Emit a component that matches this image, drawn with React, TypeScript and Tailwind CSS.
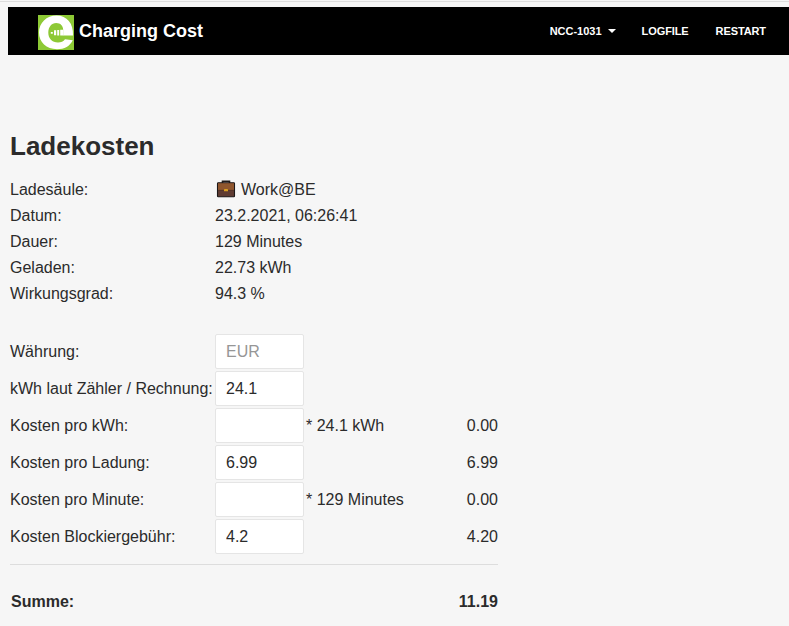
function Logo() {
  return (
    <svg width="36" height="35" viewBox="0 0 36 35" className="shrink-0" aria-hidden="true">
      <rect width="36" height="35" fill="#8dc935" />
      <path
        d="M35 20.500C35.500 8.500 29 .6 18.500 .6C8.500 .6 1 8 1 17.600C1 27.500 8.500 34.200 19 34.200C26.500 34.200 32 31 34.800 25.200L27 24.300C25.500 26.600 23 27.600 20 27.600C14.200 27.600 10.300 23.500 10.300 17.800C10.300 12 13.500 8 18.200 8C22.500 8 25.200 10.800 25.200 15V20.500Z"
        fill="#fff"
      />
      <path d="M12.800 17h2v1.800h-2zM16 15.300h2.200v5H16zM19.200 15h2v5.500h-2zM22.200 14.700h3.200v5.800h-3.200z" fill="#fff" />
    </svg>
  );
}

function Briefcase() {
  return (
    <svg width="20" height="18" viewBox="0 0 20 18" className="mr-[5px] mb-0.5 ml-px shrink-0" aria-hidden="true">
      <path d="M6.500 4V1.300h7V4" fill="none" stroke="#211b1b" strokeWidth="1.600" />
      <rect x="1.500" y="2.800" width="17" height="14" rx=".7" fill="#5f3b32" stroke="#1c1717" strokeWidth="1.100" />
      <path d="M2 3.300h16v6.800H2z" fill="#8f562e" />
      <path d="M2 9.900h16v.6H2z" fill="#4b2c24" />
      <rect x="8" y="9" width="4" height="2.300" rx=".4" fill="#dba020" />
    </svg>
  );
}

const details = [
  ["Datum:", "23.2.2021, 06:26:41"],
  ["Dauer:", "129 Minutes"],
  ["Geladen:", "22.73 kWh"],
  ["Wirkungsgrad:", "94.3 %"],
];

const fields = [
  { label: "Währung:", value: "", placeholder: "EUR", note: "", total: "" },
  { label: "kWh laut Zähler / Rechnung:", value: "24.1", note: "", total: "" },
  { label: "Kosten pro kWh:", value: "", note: "* 24.1 kWh", total: "0.00" },
  { label: "Kosten pro Ladung:", value: "6.99", note: "", total: "6.99" },
  { label: "Kosten pro Minute:", value: "", note: "* 129 Minutes", total: "0.00" },
  { label: "Kosten Blockiergebühr:", value: "4.2", note: "", total: "4.20" },
];

export default function App() {
  return (
    <div className="h-[626px] overflow-hidden bg-[#f6f6f6] pt-px font-['Liberation_Sans',Arial,sans-serif] text-base text-[#2b2b2b]">
      <div className="h-px bg-[#dddddd]" />
      <header className="mt-[5px] ml-2 flex h-12 items-center bg-black pr-[23px] pl-[30px] text-white">
        <div className="pt-[3px]">
          <Logo />
        </div>
        <span className="ml-[5px] text-[18px] leading-6 font-bold">Charging Cost</span>
        <nav className="ml-auto flex items-center text-[11px] font-bold">
          <a className="flex items-center">
            NCC-1031
            <span className="ml-[6px] border-x-4 border-t-4 border-x-transparent border-t-white" />
          </a>
          <a className="ml-[26px] tracking-[-0.1px]">LOGFILE</a>
          <a className="ml-[27px] tracking-[-0.1px]">RESTART</a>
        </nav>
      </header>
      <main className="ml-[10px] w-[488px] pt-[75px]">
        <h1 className="h-[47px] text-[26px] leading-8 font-bold">Ladekosten</h1>
        <dl className="grid grid-cols-[205px_1fr] leading-[26px]">
          <dt>Ladesäule:</dt>
          <dd className="flex items-center">
            <Briefcase />
            Work@BE
          </dd>
          {details.map(([label, value]) => (
            <div key={label} className="contents">
              <dt>{label}</dt>
              <dd>{value}</dd>
            </div>
          ))}
        </dl>
        <div className="mt-[27px] flex flex-col gap-0.5">
          {fields.map((f) => (
            <label key={f.label} className="flex h-[35px] items-center">
              <span className="w-[205px] shrink-0 whitespace-nowrap">{f.label}</span>
              <input
                className="h-[35px] w-[89px] rounded-[2px] border border-[#e5e5e5] bg-white px-[10px] placeholder:text-[#969696]"
                defaultValue={f.value}
                placeholder={f.placeholder}
              />
              <span className="ml-0.5">{f.note}</span>
              <span className="ml-auto">{f.total}</span>
            </label>
          ))}
        </div>
        <hr className="mt-[10px] border-[#dddddd]" />
        <div className="mt-6 flex justify-between pl-px leading-[26px] font-bold">
          <span>Summe:</span>
          <span>11.19</span>
        </div>
      </main>
    </div>
  );
}
